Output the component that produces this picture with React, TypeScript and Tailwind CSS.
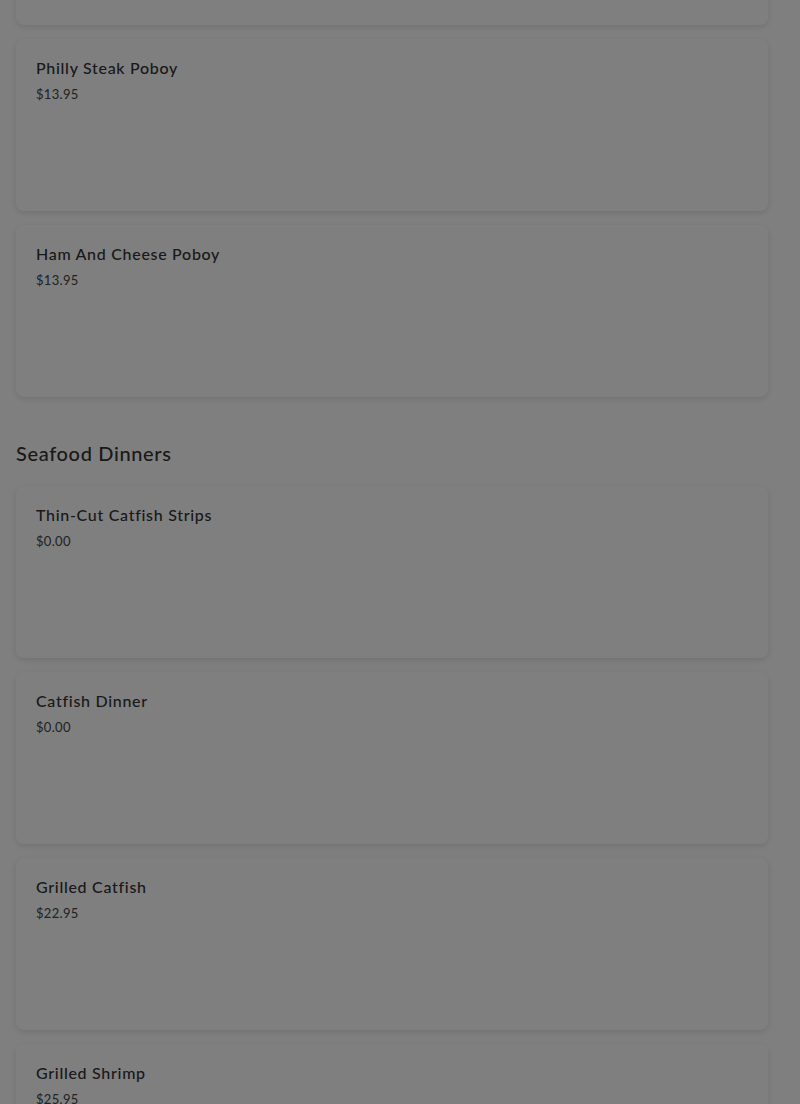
import React from "react";

type Item = { name: string; price: string };

const poboys: Item[] = [
  { name: "Philly Steak Poboy", price: "$13.95" },
  { name: "Ham And Cheese Poboy", price: "$13.95" },
];

const seafood: Item[] = [
  { name: "Thin-Cut Catfish Strips", price: "$0.00" },
  { name: "Catfish Dinner", price: "$0.00" },
  { name: "Grilled Catfish", price: "$22.95" },
  { name: "Grilled Shrimp", price: "$25.95" },
];

const MenuCard = ({ item }: { item: Item }) => (
  <div className="h-[172px] rounded-lg bg-white px-5 pt-[17px] shadow-[0_2px_6px_rgba(0,0,0,0.12)]">
    <div className="text-[16px] font-medium leading-6 tracking-[0.7px] text-[#333]">
      {item.name}
    </div>
    <div className="mt-[4px] text-[13px] leading-5 tracking-[0.3px] text-[#444]">
      {item.price}
    </div>
  </div>
);

export default function App() {
  return (
    <div
      className="relative h-[1104px] overflow-hidden bg-white"
      style={{ fontFamily: "Lato, 'Noto Sans', sans-serif" }}
    >
      <div className="flex flex-col pl-4 pr-8">
        <div className="-mt-[147px] h-[172px] rounded-lg bg-white shadow-[0_2px_6px_rgba(0,0,0,0.12)]" />
        <div className="mt-[14px] flex flex-col gap-[14px]">
          {poboys.map((i) => (
            <MenuCard key={i.name} item={i} />
          ))}
        </div>
        <h2 className="mt-[42px] text-[20px] font-medium leading-7 tracking-[0.65px] text-[#333]">
          Seafood Dinners
        </h2>
        <div className="mt-[19px] flex flex-col gap-[14px]">
          {seafood.map((i) => (
            <MenuCard key={i.name} item={i} />
          ))}
        </div>
      </div>
      <div className="fixed inset-0 bg-black/50" />
    </div>
  );
}
